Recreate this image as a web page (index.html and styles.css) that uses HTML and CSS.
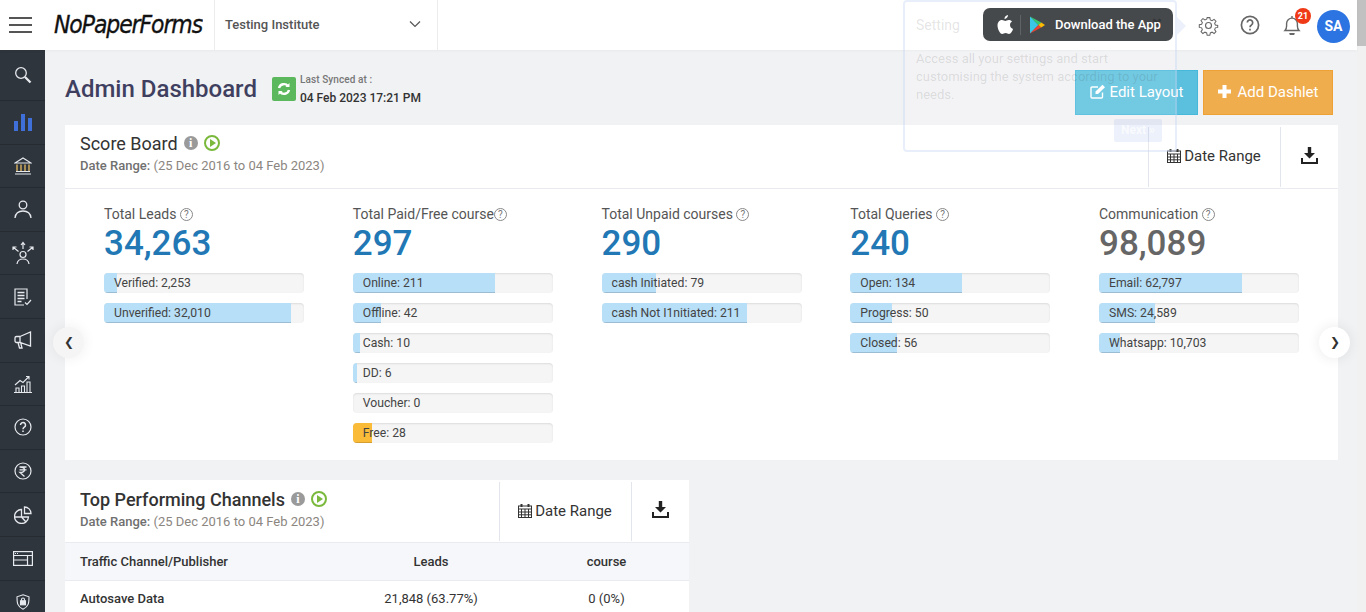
FILE: index.html
```html
<!DOCTYPE html>
<html lang="en">
<head>
  <meta charset="UTF-8">
  <title>Admin Dashboard</title>
  <link rel="stylesheet" href="styles.css">
</head>
<body>
<div class="page">
  <div class="app">
    <header class="topbar">
      <div class="burger"><span></span><span></span><span></span></div>
      <div class="logo"><span>NoPaperForms</span></div>
      <div class="institute">
        <span>Testing Institute</span>
        <svg width="12" height="8" viewBox="0 0 12 8"><path d="M1 1.500l5 5 5-5" fill="none" stroke="#555" stroke-width="1.200"/></svg>
      </div>
      <div class="top-icons">
        <svg class="gear" width="21" height="21" viewBox="0 0 24 24" fill="none" stroke="#666" stroke-width="1.300"><circle cx="12" cy="12" r="3.400"/><path d="M10.300 2h3.400l.6 3 2.200.9 2.600-1.700 2.400 2.400-1.700 2.600.9 2.200 3 .6v2.400l-3 .6-.9 2.200 1.700 2.600-2.400 2.400-2.600-1.700-2.200.9-.6 3h-3.400l-.6-3-2.200-.9-2.600 1.700-2.400-2.400 1.700-2.600-.9-2.200-3-.6V11l3-.6.9-2.200-1.700-2.600 2.400-2.400 2.600 1.700 2.200-.9z" transform="translate(1.200 1.200) scale(.9)"/></svg>
        <svg class="help-top" width="20" height="20" viewBox="0 0 20 20" fill="none" stroke="#666" stroke-width="1.700"><circle cx="10" cy="10" r="8.600"/><path d="M7.300 7.600a2.700 2.700 0 1 1 4.200 2.300c-1 .6-1.500 1.100-1.500 2.300"/><path d="M10 13.700v1.700"/></svg>
        <div class="bell">
          <svg width="18" height="20" viewBox="0 0 18 20" fill="none" stroke="#666" stroke-width="1.400"><path d="M2 15.500c1.200-1.200 1.600-2.500 1.600-4.500V8.500a5.400 5.400 0 0 1 10.800 0V11c0 2 .4 3.300 1.600 4.500z"/><path d="M7 18a2 2 0 0 0 4 0" fill="#666"/><path d="M9 1v2"/></svg>
          <span class="badge">21</span>
        </div>
        <div class="avatar">SA</div>
      </div>
    </header>

    <div class="layout">
      <nav class="sidebar">
        <a class="side-item first"><svg width="18" height="18" viewBox="0 0 18 18" fill="none" stroke="#e6e9ee" stroke-width="1.300"><circle cx="7" cy="7" r="5.300"/><path d="M11 11l5.500 5.500" stroke-width="2.300"/></svg></a>
        <a class="side-item"><svg width="18" height="17" viewBox="0 0 18 17" fill="#3f6fd8"><rect y="7" width="4" height="10"/><rect x="7" width="4" height="17"/><rect x="14" y="4" width="4" height="13"/></svg></a>
        <a class="side-item"><svg width="18" height="18" viewBox="0 0 18 18" fill="none" stroke="#e6e9ee" stroke-width="1.100"><path d="M1 6l8-5 8 5z"/><path d="M3 7.500v6.500M7 7.500v6.500M11 7.500v6.500M15 7.500v6.500" stroke="#d9b25f" stroke-width="1.400"/><path d="M2 14.500h14M1 17h16"/></svg></a>
        <a class="side-item"><svg width="18" height="19" viewBox="0 0 18 19" fill="none" stroke="#e6e9ee" stroke-width="1.300"><circle cx="9" cy="5" r="3.800"/><path d="M1 18c.5-4.500 3.500-7 8-7s7.500 2.500 8 7"/></svg></a>
        <a class="side-item"><svg width="24" height="24" viewBox="0 0 24 24" fill="none" stroke="#e6e9ee" stroke-width="1.200"><circle cx="12" cy="13.500" r="3"/><path d="M6 23c.5-3.500 2.500-5 6-5s5.500 1.500 6 5M12 8V2M10 4l2-2.500L14 4M7.500 10.500L2 6M2 9V6h3.500M16.500 10.500L22 6M22 9V6h-3.500"/></svg></a>
        <a class="side-item"><svg width="18" height="18" viewBox="0 0 18 18" fill="none" stroke="#e6e9ee" stroke-width="1.200"><path d="M13 11V1H1v16h9"/><path d="M3.500 4.500h7M3.500 7.500h7M3.500 10.500h7M3.500 13.500h4" stroke-width="1.400"/><path d="M11 14.500l2 2 4-4.500"/></svg></a>
        <a class="side-item"><svg width="18" height="18" viewBox="0 0 18 18" fill="none" stroke="#e6e9ee" stroke-width="1.300"><path d="M6 5.500L16.500 1v14L6 11.500H2.500a1.500 1.500 0 0 1-1.500-1.500V7a1.500 1.500 0 0 1 1.500-1.500zM4 11.500L5.500 17H8L6.800 12M6 5.500v6"/></svg></a>
        <a class="side-item"><svg width="18" height="18" viewBox="0 0 18 18" fill="none" stroke="#e6e9ee" stroke-width="1.100"><path d="M0 17.500h18M2 17v-4h3v4M7.500 17v-6h3v6M13 17V7h3v10"/><path d="M1 10l5-4.500 3 2L14.500 2M12 1.500h3v3"/></svg></a>
        <a class="side-item"><svg width="18" height="18" viewBox="0 0 18 18" fill="none" stroke="#e6e9ee" stroke-width="1.200"><circle cx="9" cy="9" r="8"/><path d="M6.500 7a2.500 2.500 0 1 1 3.800 2.100c-1 .6-1.300 1-1.300 2.200M9 12.500v1.500" stroke-width="1.500"/></svg></a>
        <a class="side-item"><svg width="18" height="18" viewBox="0 0 18 18" fill="none" stroke="#e6e9ee" stroke-width="1.200"><circle cx="9" cy="9" r="8"/><path d="M5.500 5h7M5.500 7.800h7M6 5c3.500 0 4.500 1 4.500 2.800S9 10.500 6 10.500L10.500 14.500" stroke-width="1.300"/></svg></a>
        <a class="side-item"><svg width="18" height="18" viewBox="0 0 18 18" fill="none" stroke="#e6e9ee" stroke-width="1.300"><path d="M7.500 3.500a7 7 0 1 0 7 7.500h-7zM7.500 3.500V11M1 11h6.500l4.500 5"/><path d="M10.500 1v6.500H17A6.500 6.500 0 0 0 10.500 1z"/></svg></a>
        <a class="side-item"><svg width="20" height="15" viewBox="0 0 20 15" fill="none" stroke="#e6e9ee" stroke-width="1.200"><rect x=".6" y=".6" width="18.800" height="13.800"/><path d="M1 4.500h18M1 9h14M14.500 5v9" /><path d="M2 2.500h4" stroke-dasharray="1 1"/></svg></a>
        <a class="side-item"><svg width="14" height="16" viewBox="0 0 14 16" fill="none" stroke="#e6e9ee" stroke-width="1.100"><path d="M7 .8l6 2c0 6 0 9.500-6 12.400C1 12.300 1 8.800 1 2.800z"/><rect x="4.500" y="6.800" width="5" height="4" fill="#e6e9ee"/><path d="M5.500 6.800V5.500a1.500 1.500 0 0 1 3 0v1.300"/></svg></a>
      </nav>

      <main class="content">
        <div class="title-row">
          <h1 class="page-title">Admin Dashboard</h1>
          <div class="sync-icon"><svg width="14" height="14" viewBox="0 0 14 14" fill="none" stroke="#fff" stroke-width="2.400"><path d="M2 6a5.200 5.200 0 0 1 9-2"/><path d="M12 8a5.200 5.200 0 0 1-9 2"/><path d="M12.500 1v4h-4z" fill="#fff" stroke="none"/><path d="M1.500 13V9h4z" fill="#fff" stroke="none"/></svg></div>
          <div class="sync-text">
            <div class="sync-label">Last Synced at :</div>
            <div class="sync-date">04 Feb 2023 17:21 PM</div>
          </div>
          <div class="title-actions">
            <button class="btn btn-edit"><svg width="16" height="15" viewBox="0 0 16 15" fill="none" stroke="#fff" stroke-width="1.400"><path d="M12.500 8.500V13a1 1 0 0 1-1 1H2a1 1 0 0 1-1-1V4a1 1 0 0 1 1-1h6"/><path d="M5.500 7.500L12.500 .8l2.500 2.500-7 6.700H5.500z" fill="#fff" stroke="none"/></svg>Edit Layout</button>
            <button class="btn btn-add"><svg width="13" height="13" viewBox="0 0 13 13" fill="#fff"><path d="M4.500 0h4v4.500H13v4H8.500V13h-4V8.500H0v-4h4.500z"/></svg>Add Dashlet</button>
          </div>
        </div>

        <section class="card">
          <div class="card-head">
            <div class="card-title">
              <div class="title-line">
                <h2>Score Board</h2>
                <span class="info-dot">i</span>
                <span class="play-dot"></span>
              </div>
              <div class="range"><b>Date Range:</b> (25 Dec 2016 to 04 Feb 2023)</div>
            </div>
            <div class="head-cell date-cell"><svg class="cal" width="14" height="14" viewBox="0 0 14 14" fill="none" stroke="#333" stroke-width="1"><rect x=".5" y="2" width="13" height="11.500"/><path d="M.5 5h13M.5 8h13M.5 10.800h13M3.500 5v8.500M7 5v8.500M10.500 5v8.500"/><path d="M3.500 0v3M10.500 0v3" stroke-width="2"/></svg>Date Range</div>
            <div class="head-cell dl-cell"><svg width="17" height="17" viewBox="0 0 17 17" fill="#222"><path d="M6.800 0h3.400v6H14l-5.500 5.500L3 6h3.800z"/><path d="M0 11h2v4h13v-4h2v6H0z"/></svg></div>
          </div>
          <div class="stats">
            <div class="stat">
              <div class="stat-name">Total Leads <span class="help">?</span></div>
              <div class="stat-num">34,263</div>
              <div class="bar"><div class="fill" style="width:6.5%"></div><span>Verified: 2,253</span></div>
              <div class="bar"><div class="fill" style="width:93.5%"></div><span>Unverified: 32,010</span></div>
            </div>
            <div class="stat">
              <div class="stat-name">Total Paid/Free course<span class="help">?</span></div>
              <div class="stat-num">297</div>
              <div class="bar"><div class="fill" style="width:71%"></div><span>Online: 211</span></div>
              <div class="bar"><div class="fill" style="width:14%"></div><span>Offline: 42</span></div>
              <div class="bar"><div class="fill" style="width:3.4%"></div><span>Cash: 10</span></div>
              <div class="bar"><div class="fill" style="width:2%"></div><span>DD: 6</span></div>
              <div class="bar"><span>Voucher: 0</span></div>
              <div class="bar"><div class="fill fill-free" style="width:9.4%"></div><span>Free: 28</span></div>
            </div>
            <div class="stat">
              <div class="stat-name">Total Unpaid courses <span class="help">?</span></div>
              <div class="stat-num">290</div>
              <div class="bar"><div class="fill" style="width:27.2%"></div><span>cash Initiated: 79</span></div>
              <div class="bar"><div class="fill" style="width:72.8%"></div><span>cash Not I1nitiated: 211</span></div>
            </div>
            <div class="stat">
              <div class="stat-name">Total Queries <span class="help">?</span></div>
              <div class="stat-num">240</div>
              <div class="bar"><div class="fill" style="width:55.8%"></div><span>Open: 134</span></div>
              <div class="bar"><div class="fill" style="width:20.8%"></div><span>Progress: 50</span></div>
              <div class="bar"><div class="fill" style="width:23.3%"></div><span>Closed: 56</span></div>
            </div>
            <div class="stat">
              <div class="stat-name">Communication <span class="help">?</span></div>
              <div class="stat-num stat-grey">98,089</div>
              <div class="bar"><div class="fill" style="width:71.5%"></div><span>Email: 62,797</span></div>
              <div class="bar"><div class="fill" style="width:28%"></div><span>SMS: 24,589</span></div>
              <div class="bar"><div class="fill" style="width:10.5%"></div><span>Whatsapp: 10,703</span></div>
            </div>
          </div>
          <div class="arrow arrow-left">&#10094;</div>
          <div class="arrow arrow-right">&#10095;</div>
        </section>

        <section class="card card-small">
          <div class="card-head">
            <div class="card-title">
              <div class="title-line">
                <h2>Top Performing Channels</h2>
                <span class="info-dot">i</span>
                <span class="play-dot"></span>
              </div>
              <div class="range"><b>Date Range:</b> (25 Dec 2016 to 04 Feb 2023)</div>
            </div>
            <div class="head-cell date-cell"><svg class="cal" width="14" height="14" viewBox="0 0 14 14" fill="none" stroke="#333" stroke-width="1"><rect x=".5" y="2" width="13" height="11.500"/><path d="M.5 5h13M.5 8h13M.5 10.800h13M3.500 5v8.500M7 5v8.500M10.500 5v8.500"/><path d="M3.500 0v3M10.500 0v3" stroke-width="2"/></svg>Date Range</div>
            <div class="head-cell dl-cell"><svg width="17" height="17" viewBox="0 0 17 17" fill="#222"><path d="M6.800 0h3.400v6H14l-5.500 5.500L3 6h3.800z"/><path d="M0 11h2v4h13v-4h2v6H0z"/></svg></div>
          </div>
          <div class="table-row table-head">
            <div class="col-name">Traffic Channel/Publisher</div>
            <div class="col-leads">Leads</div>
            <div class="col-course">course</div>
          </div>
          <div class="table-row table-body">
            <div class="col-name">Autosave Data</div>
            <div class="col-leads">21,848 (63.77%)</div>
            <div class="col-course">0 (0%)</div>
          </div>
        </section>
      </main>
    </div>
  </div>
  <div class="scrollbar"><div class="scroll-thumb"></div></div>
</div>

<div class="tour">
  <div class="tour-title">Setting</div>
  <div class="tour-close">&#10006;</div>
  <p class="tour-text">Access all your settings and start customising the system according to your needs.</p>
  <div class="tour-next">Next &raquo;</div>
  <div class="tour-tip"></div>
</div>

<div class="app-pill">
  <svg width="16" height="19" viewBox="0 0 16 19" fill="#fff"><path d="M11 0c.2 1.800-1.500 4-3.500 3.900C7.300 2 9.200.2 11 0zM13 10c0-2 1.500-3 2-3.400C14 5.200 12.500 5 11.800 5c-1.500 0-2.700 1-3.500 1S6.400 5 5 5C3 5 .5 6.800.5 10.500c0 3.500 2.500 8.500 4.700 8.500 1.300 0 1.800-.9 3.400-.9s2 .9 3.400.9c2 0 3.600-3.500 4-5C14.300 13.300 13 12 13 10z"/></svg>
  <span class="pill-line"></span>
  <svg width="15" height="18" viewBox="0 0 16 18"><path d="M0 0l9 9-9 9z" fill="#3bc7e8"/><path d="M0 0l12 6.300L9 9z" fill="#37c871"/><path d="M0 18l12-6.300L9 9z" fill="#ea4335"/><path d="M12 6.300L16 9l-4 2.700L9 9z" fill="#fbbc04"/></svg>
  <span class="pill-text">Download the App</span>
</div>
</body>
</html>
```

FILE: styles.css
```css
* {
  box-sizing: border-box;
}
html, body {
  margin: 0;
  padding: 0;
  height: 100%;
  overflow: hidden;
  font-family: Roboto, "Liberation Sans", sans-serif;
  background: #f1f2f4;
}
.page {
  display: flex;
  height: 612px;
  overflow: hidden;
}
.app {
  flex: 1;
  min-width: 0;
}
.scrollbar {
  width: 9px;
  background: #f1f1f1;
  flex: none;
}
.scroll-thumb {
  height: 46px;
  background: #c1c1c1;
}

/* top bar */
.topbar {
  display: flex;
  align-items: center;
  height: 50px;
  background: #fff;
  box-shadow: 0 1px 3px rgba(0, 0, 0, 0.04);
  position: relative;
  z-index: 1;
}
.burger {
  width: 45px;
  padding-left: 9px;
  display: flex;
  flex-direction: column;
  gap: 5px;
}
.burger span {
  display: block;
  width: 23px;
  height: 2px;
  background: #555;
}
.logo {
  width: 169px;
  padding: 0 0 2px 9px;
  font-family: "DejaVu Sans", cursive;
  font-style: italic;
  font-size: 22px;
  letter-spacing: -1.1px;
  color: #111;
  white-space: nowrap;
  -webkit-text-stroke: .3px #111;
}
.logo span {
  display: inline-block;
  transform: scaleY(1.15);
}
.institute {
  width: 224px;
  height: 50px;
  display: flex;
  align-items: center;
  justify-content: space-between;
  padding: 0 16px 2px 10px;
  border-left: 1px solid #ececec;
  border-right: 1px solid #ececec;
  font-size: 13px;
  font-weight: 500;
  color: #555;
}
.top-icons {
  margin-left: auto;
  display: flex;
  align-items: center;
}
.gear {
  margin-right: 21px;
}
.help-top {
  margin-right: 23px;
}
.bell {
  position: relative;
  margin-right: 16px;
  height: 20px;
}
.badge {
  position: absolute;
  top: -7px;
  left: 12px;
  width: 16px;
  height: 16px;
  border-radius: 50%;
  background: #f03a17;
  color: #fff;
  font-size: 9px;
  font-weight: 700;
  text-align: center;
  line-height: 16px;
}
.avatar {
  width: 33px;
  height: 33px;
  border-radius: 50%;
  background: #2b74e2;
  color: #fff;
  font-size: 14px;
  font-weight: 700;
  text-align: center;
  line-height: 33px;
  margin-right: 7px;
  margin-top: 3px;
}

/* sidebar */
.layout {
  display: flex;
  height: 562px;
}
.sidebar {
  width: 45px;
  flex: none;
  background: #2f353d;
  overflow: hidden;
}
.side-item {
  display: flex;
  align-items: center;
  justify-content: center;
  height: 43.6px;
  border-bottom: 1px solid #262b32;
}
.side-item.first {
  height: 51px;
}

/* main */
.content {
  flex: 1;
  min-width: 0;
  padding: 20px 19px 0 20px;
}
.title-row {
  display: flex;
  align-items: flex-start;
  height: 55px;
}
.page-title {
  margin: 6px 15px 0 0;
  font-size: 24px;
  line-height: 26px;
  font-weight: 500;
  color: #3f3f5f;
}
.sync-icon {
  width: 24px;
  height: 24px;
  margin-top: 7px;
  background: #5cb85c;
  border-radius: 2px;
  display: flex;
  align-items: center;
  justify-content: center;
}
.sync-text {
  margin-left: 4px;
}
.sync-label {
  font-size: 10px;
  font-weight: 500;
  color: #777;
  line-height: 13px;
  margin-top: 3px;
  letter-spacing: .1px;
}
.sync-date {
  font-size: 12px;
  font-weight: 500;
  color: #333;
  line-height: 14px;
  margin-top: 5px;
}
.title-actions {
  margin-left: auto;
  margin-right: 5px;
  display: flex;
  gap: 5px;
}
.btn {
  height: 45px;
  display: flex;
  align-items: center;
  justify-content: center;
  gap: 4px;
  border: 1px solid;
  color: #fff;
  font-family: inherit;
  font-size: 15px;
  padding: 0 0 2px;
}
.btn-edit {
  width: 123px;
  background: #5bc0de;
  border-color: #46b8da;
}
.btn-add {
  width: 130px;
  gap: 7px;
  background: #f0ad4e;
  border-color: #eea236;
}

/* cards */
.card {
  position: relative;
  background: #fff;
}
.card-small {
  width: 624px;
  margin-top: 20px;
}
.card-head {
  display: flex;
  height: 64px;
  border-bottom: 1px solid #e9ebf0;
}
.card-small .card-head {
  height: 63px;
}
.card-title {
  flex: 1;
  padding: 8px 0 0 15px;
}
.card-small .card-title {
  padding-top: 9px;
}
.title-line {
  display: flex;
  align-items: center;
  gap: 6px;
}
.title-line h2 {
  margin: 0;
  font-size: 18px;
  line-height: 22px;
  font-weight: 400;
  color: #333;
}
.card-small .title-line h2 {
  font-weight: 500;
}
.info-dot {
  width: 14px;
  height: 14px;
  margin-top: -2px;
  border-radius: 50%;
  background: #9a9a9a;
  color: #fff;
  font-family: "Liberation Serif", serif;
  font-weight: 700;
  font-size: 12px;
  line-height: 14px;
  text-align: center;
}
.play-dot {
  position: relative;
  width: 16px;
  height: 16px;
  margin-top: -2px;
  border-radius: 50%;
  border: 2px solid #7ab93c;
}
.play-dot::after {
  content: "";
  position: absolute;
  left: 4px;
  top: 2px;
  border-left: 6px solid #7ab93c;
  border-top: 4px solid transparent;
  border-bottom: 4px solid transparent;
}
.range {
  margin-top: 3px;
  font-size: 13px;
  line-height: 15px;
  color: #8b8680;
}
.range b {
  font-weight: 500;
  color: #707070;
}
.head-cell {
  display: flex;
  align-items: center;
  justify-content: center;
  border-left: 1px solid #e3e5ec;
  margin-top: 2px;
  margin-bottom: 1px;
  color: #333;
  font-size: 15px;
}
.date-cell {
  width: 132px;
  gap: 3px;
  padding: 0 1px 3px 0;
}
.card-small .date-cell {
  padding-bottom: 2px;
}
.dl-cell {
  width: 58px;
}
.dl-cell svg {
  margin-top: -4px;
}

/* score board */
.stats {
  display: flex;
  justify-content: space-between;
  height: 271px;
  padding: 16px 39px 0;
}
.stat {
  width: 200px;
}
.stat-name {
  font-size: 14px;
  line-height: 18px;
  color: #555;
  white-space: nowrap;
}
.help {
  display: inline-block;
  width: 13px;
  height: 13px;
  border: 1px solid #888;
  border-radius: 50%;
  font-size: 10px;
  line-height: 11px;
  text-align: center;
  color: #777;
  vertical-align: 1px;
}
.stat-num {
  font-size: 35px;
  line-height: 42px;
  font-weight: 500;
  color: #2178b5;
  margin-bottom: 8px;
}
.stat-grey {
  color: #666;
}
.bar {
  position: relative;
  height: 20px;
  margin-bottom: 10px;
  background: #f5f5f5;
  border-radius: 4px;
  overflow: hidden;
  box-shadow: inset 0 1px 2px rgba(0, 0, 0, 0.1);
  font-size: 12.2px;
  line-height: 20px;
  color: #444;
}
.bar span {
  position: relative;
  padding-left: 10px;
}
.fill {
  position: absolute;
  left: 0;
  top: 0;
  bottom: 0;
  background: #b7dff8;
  box-shadow: inset 0 -1px 0 rgba(0, 0, 0, 0.15);
}
.fill-free {
  background: #f9bb38;
}
.arrow {
  position: absolute;
  top: 202px;
  width: 31px;
  height: 31px;
  border-radius: 50%;
  font-size: 12px;
  line-height: 31px;
  text-align: center;
  color: #333;
}
.arrow-left {
  left: -12px;
  background: #f5f5f5;
  box-shadow: 0 0 14px rgba(0, 0, 0, 0.07);
}
.arrow-right {
  right: -12px;
  background: #fff;
  box-shadow: 0 0 14px rgba(0, 0, 0, 0.09);
}

/* channels table */
.table-row {
  display: flex;
  align-items: center;
  height: 38px;
  padding: 0 0 0 15px;
  font-size: 13px;
  color: #333;
}
.table-head {
  background: #f5f7fa;
  border-bottom: 1px solid #e9ebf0;
  font-weight: 500;
  padding-bottom: 1px;
}
.table-body {
  padding-bottom: 3px;
}
.col-name {
  width: 258px;
  font-weight: 500;
}
.col-leads {
  width: 186px;
  text-align: center;
}
.col-course {
  flex: 1;
  text-align: center;
}

/* overlays */
.tour {
  position: absolute;
  z-index: 5;
  left: 903px;
  top: 0;
  width: 274px;
  height: 152px;
  padding: 15px 11px;
  background: rgba(255, 255, 255, 0.14);
  border: 2px solid rgba(190, 205, 240, 0.35);
  border-radius: 4px;
  color: rgba(60, 60, 60, 0.14);
}
.tour-title {
  font-size: 14px;
  line-height: 16px;
}
.tour-close {
  position: absolute;
  top: 13px;
  right: 12px;
  font-size: 14px;
  color: #111;
}
.tour-text {
  margin: 17px 0 0 0;
  font-size: 13px;
  line-height: 18px;
}
.tour-next {
  position: absolute;
  left: 209px;
  top: 117px;
  width: 48px;
  height: 23px;
  background: rgba(70, 120, 220, 0.1);
  border-radius: 2px;
  color: rgba(255, 255, 255, 0.7);
  font-size: 12px;
  font-weight: 700;
  line-height: 23px;
  text-align: center;
}
.tour-tip {
  position: absolute;
  right: -11px;
  top: 15px;
  border-left: 9px solid rgba(190, 205, 240, 0.3);
  border-top: 9px solid transparent;
  border-bottom: 9px solid transparent;
}
.app-pill {
  position: absolute;
  z-index: 6;
  left: 983px;
  top: 8px;
  width: 190px;
  height: 33px;
  display: flex;
  align-items: center;
  padding-left: 14px;
  background: rgba(56, 59, 62, 0.93);
  border-radius: 7px;
}
.pill-line {
  width: 1px;
  height: 20px;
  margin: 0 9px 0 7px;
  background: #5f6366;
}
.pill-text {
  margin-left: 10px;
  color: #fff;
  font-size: 13px;
  font-weight: 500;
  white-space: nowrap;
}
```
